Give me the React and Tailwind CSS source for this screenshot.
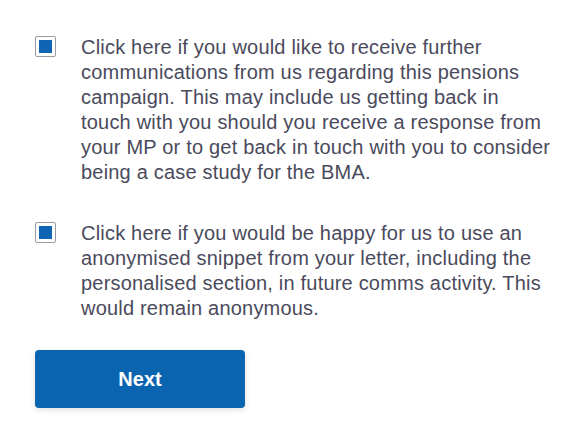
export default function App() {
  const Item = ({ children }) => (
    <label className="flex items-start gap-[25px]">
      <span className="mt-[1px] flex h-[21px] w-[21px] shrink-0 items-center justify-center rounded-[2px] border border-[#9a9aa6] bg-white">
        <span className="h-[13px] w-[13px] bg-[#0f64b4]" />
      </span>
      <span className="w-[478px] text-[20px] leading-[25px] tracking-[0.2px] text-[#4a4a5c]">{children}</span>
    </label>
  );
  return (
    <div className="h-[421px] w-[564px] bg-white pl-[35px] pt-[35px]" style={{ fontFamily: '"Liberation Sans", Arial, sans-serif' }}>
      <div className="flex flex-col gap-[36px]">
        <Item>
          Click here if you would like to receive further<br />
          communications from us regarding this pensions<br />
          campaign. This may include us getting back in<br />
          touch with you should you receive a response from<br />
          your MP or to get back in touch with you to consider<br />
          being a case study for the BMA.
        </Item>
        <Item>
          Click here if you would be happy for us to use an<br />
          anonymised snippet from your letter, including the<br />
          personalised section, in future comms activity. This<br />
          would remain anonymous.
        </Item>
      </div>
      <button className="mt-[29px] flex h-[58px] w-[210px] items-center justify-center rounded-[4px] bg-[#0b64b0] text-[20px] font-bold text-white shadow-[0_2px_6px_rgba(0,0,0,0.12)]">
        Next
      </button>
    </div>
  );
}
